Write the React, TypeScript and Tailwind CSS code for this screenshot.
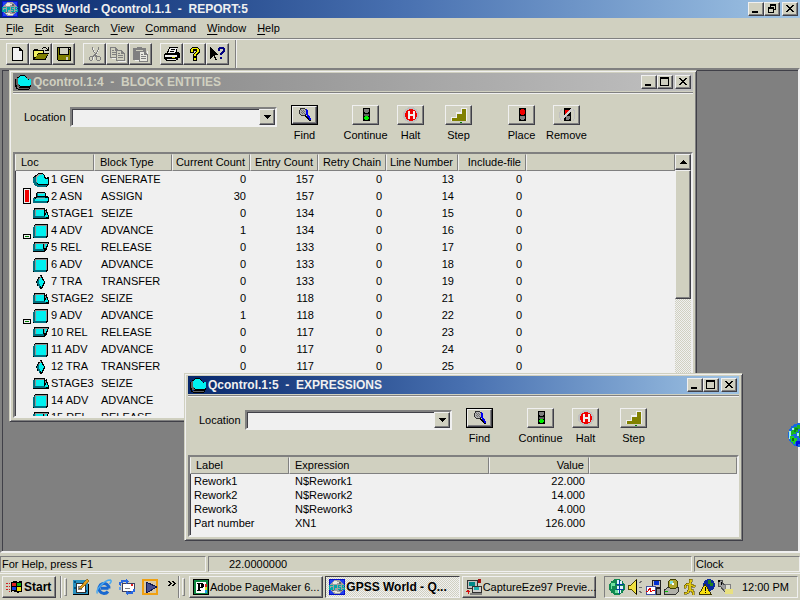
import type { ReactNode } from "react";

const raised =
  "border border-t-[#f0f0f0] border-l-[#f0f0f0] border-b-[#404048] border-r-[#404048] bg-[#d0d0c0] shadow-[inset_-1px_-1px_0_#808080]";
const sunken =
  "border-2 border-t-[#808080] border-l-[#808080] border-b-[#f0f0f0] border-r-[#f0f0f0] shadow-[inset_1px_1px_0_#404048]";
const thinSunken =
  "border border-t-[#808080] border-l-[#808080] border-b-[#f0f0f0] border-r-[#f0f0f0]";
const dither =
  "bg-[repeating-conic-gradient(#d0d0c0_0_25%,#f0f0f0_0_50%)] bg-[length:2px_2px]";

function Icon({ size = 16, children }: { size?: number; children: ReactNode }) {
  return (
    <svg
      width={size}
      height={size}
      viewBox="0 0 16 16"
      shapeRendering="crispEdges"
      aria-hidden="true"
      className="block shrink-0"
    >
      {children}
    </svg>
  );
}

/* ---------- window chrome ---------- */

function CaptionButton({ kind }: { kind: "Minimize" | "Maximize" | "Restore" | "Close" }) {
  return (
    <button aria-label={kind} className={`${raised} flex h-[14px] w-4 items-center justify-center`}>
      <svg width="12" height="10" viewBox="0 0 12 10" shapeRendering="crispEdges" aria-hidden="true">
        {kind === "Minimize" && <path d="M2 7h6v2H2z" />}
        {kind === "Maximize" && <path fillRule="evenodd" d="M1 0h9v9H1zM2 2v6h7V2z" />}
        {kind === "Restore" && (
          <path
            fillRule="evenodd"
            d="M4 0h6v6H8V5h1V2H5v1H4zM2 3h6v6H2zM3 5v3h4V5z"
          />
        )}
        {kind === "Close" && (
          <path d="M2 1h2v1h1v1h2V2h1V1h2v1H9v1H8v1H7v1h1v1h1v1h1v1H8V7H7V6H5v1H4v1H2V7h1V6h1V5h1V4H4V3H3V2H2z" />
        )}
      </svg>
    </button>
  );
}

function GpssIcon() {
  return (
    <Icon>
      <rect width="16" height="16" fill="#0810c8" />
      <rect x="1" y="1" width="14" height="14" fill="#2040f0" />
      <circle cx="8" cy="8" r="7" fill="#a0a0a0" />
      <path d="M5 2h3v1h3v1H8v1H4V3h1zM4 12h4v1h3v1H6v-1H4z" fill="#e8e8e0" />
      <path d="M10 3h2v2h-2zM3 11h2v1H3zM10 11h3v1h-3z" fill="#606068" />
      <path
        d="M0 6h4v1H1v2h1V8h2v3H0zM5 6h3v3H6v2H5zM9 6h3v1h-2v1h2v3H9v-1h2V9H9zM13 6h3v1h-2v1h2v3h-3v-1h2V9h-2z"
        fill="#00a8a8"
      />
    </Icon>
  );
}

function BlobIcon() {
  return (
    <Icon>
      <path d="M4 2h1V1h5v1h1v1h1v2h4v8h-1v1H4v-1H2v-1H1V5h1V3h2z" fill="#000" />
      <path d="M0 5h1v7h1v2h2v1h10v-1h1v1h-1v1H3v-1H1v-2H0z" fill="#000" />
      <path d="M1 5h1V4h1v6h1v2h1v1H2v-2H1zM3 14h11v1H3z" fill="#606060" />
      <path d="M5 2h5v1h1v1h1v1h1v1h1V5h2v6h-1v1H5v-1H4v-1H3V4h1V3h1z" fill="#00f0f0" />
    </Icon>
  );
}

/* ---------- block glyphs ---------- */

type Glyph = "gen" | "asn" | "seize" | "adv" | "rel" | "tra";

function BlockGlyph({ kind }: { kind: Glyph }) {
  return (
    <Icon>
      {kind === "gen" && (
        <>
          <path d="M4 2h1V1h5v1h1v1h1v2h1v1h1V5h2v8h-1v1h-1v1H4v-1H2v-1H1v-2H0V5h1V4h1V3h2z" fill="#000" />
          <path d="M0 6h1V5h2v5h1v2h1v1h9v1h-1v1H4v-1H2v-1H1v-2H0z" fill="#007080" />
          <path d="M5 3h1V2h4v1h1v3h1v1h3v5H5v-1H4v-1H3V4h2z" fill="#00f0f0" />
          <path d="M4 3h1V2h4v1H6v1H5v1H4v5H3V4h1z" fill="#a0a0a0" />
        </>
      )}
      {kind === "asn" && (
        <>
          <path d="M4 3h8v1h1v3h2v1h1v5h-1v1H0V9h1V8h2V4h1z" fill="#000" />
          <path d="M0 9h2v3h12v2H0z" fill="#007080" />
          <path d="M5 4h7v3H5zM3 9h12v3H2v-2h1z" fill="#00f0f0" />
          <path d="M4 4h1v3H4zM4 8h8v1H4z" fill="#007080" />
          <path d="M5 4h6v1H5zM3 9h9v1H3z" fill="#80c0c0" />
        </>
      )}
      {kind === "seize" && (
        <>
          <path d="M1 2h11v2h1V3h1v3h1v3h1v4H0V4h1z" fill="#000" />
          <path d="M0 4h2v6h11v2H0z" fill="#007080" />
          <path d="M3 4h8v6H3zM13 7h1v2h1v2h-3V9h1z" fill="#00f0f0" />
          <path d="M2 3h9v1H3v6H2zM12 5h1v2h-1z" fill="#909090" />
        </>
      )}
      {kind === "rel" && (
        <>
          <path d="M1 2h15v2h-1v3h-1v3h-1v1h-1v1H0V4h1z" fill="#000" />
          <path d="M0 4h2v5h9v2H0z" fill="#007080" />
          <path d="M3 4h7v5H3zM12 4h2v2h-1v2h-1z" fill="#00f0f0" />
          <path d="M2 3h13v1H3v5H2zM11 4h1v4h-1z" fill="#909090" />
        </>
      )}
      {kind === "adv" && (
        <>
          <path d="M2 1h13v13h-1v1H0V4h1V2h1z" fill="#000" />
          <path d="M0 4h1V3h1v10h11v2H1v-1H0z" fill="#007080" />
          <path d="M2 2h12v11H2z" fill="#909090" />
          <path d="M3 3h10v10H3z" fill="#00f0f0" />
        </>
      )}
      {kind === "tra" && (
        <>
          <path d="M7 1h2v2h1v2h1v2h1v3h-1v2h-1v2H9v1H7v-1H6v-2H4V9H3V7h1V5h1V3h2z" fill="#000" />
          <path d="M6 4h1v10H6v-2H5v-2H4V7h1V5h1z" fill="#007080" />
          <path d="M7 3h1v1h1v2h1v1h1v2h-1v2H9v2H8v-1H7v-2H6V6h1z" fill="#00f0f0" />
          <path d="M7 2h1v2H7v2H6V4h1z" fill="#a0a0a0" />
        </>
      )}
    </Icon>
  );
}

/* ---------- application toolbar ---------- */

const doc = (x: number, y: number, fill: string, ink: string) => (
  <g transform={`translate(${x} ${y})`}>
    <path d="M0 0h6v1h1v1h1v1h1v8H0z" fill={ink} />
    <path d="M1 1h4v3h3v6H1z" fill={fill} />
    <path d="M2 3h2v1H2zM2 5h5v1H2zM2 7h5v1H2z" fill={ink} />
  </g>
);

const toolGroups: { name: string; disabled?: boolean; art: ReactNode }[][] = [
  [
    {
      name: "New",
      art: (
        <>
          <path d="M2 1h8v1h1v1h1v1h1v11H2z" />
          <path d="M3 2h6v3h3v9H3z" fill="#f0f0f0" />
        </>
      ),
    },
    {
      name: "Open",
      art: (
        <>
          <path d="M0 4h1V3h4v1h6v3h5v1h-1v2h-1v2h-1v2H0zM9 2h1V1h3v1h1v1h1V1h1v4h-4V4h2V3h-1V2h-3v1H9z" />
          <path d="M1 5h9v2H5v1H4v2H3v1H1z" fill="#f0f060" />
          <path d="M5 8h10l-3 5H2z" fill="#808000" />
        </>
      ),
    },
    {
      name: "Save",
      art: (
        <>
          <path d="M1 1h14v14H2v-1H1z" />
          <path d="M2 2h1v7h10V4h1v10H2z" fill="#808000" />
          <path d="M4 2h8v6H4zM10 11h2v3h-2zM13 2h1v1h-1z" fill="#d0d0c0" />
        </>
      ),
    },
  ],
  [
    {
      name: "Cut",
      disabled: true,
      art: (
        <>
          <path
            d="M6 2h1v3h1v2h1v1H8V7H7V5H6zM11 2h1v3h-1v2h-1v2H9V7h1V5h1zM6 11h1v3H6zM13 11h1v3h-1v1h-3v-1h3z"
            fill="#f0f0f0"
          />
          <path
            fillRule="evenodd"
            d="M5 1h1v3h1v2h1v1h1V6h1V4h1V1h1v3h-1v2h-1v2H9v1h1v1h3v1h1v3h-1v1h-3v-1H9v-3H8v-1H7v1h-1v3H5v1H3v-1H2v-3h1v-1h3V9h1V8h1V7H7V6H6V4H5zM3 11v3h2v-3zM10 11v3h3v-3z"
            fill="#808080"
          />
        </>
      ),
    },
    {
      name: "Copy",
      disabled: true,
      art: (
        <>
          <path d="M8 15h8v1H8zM2 12h5v1H2z" fill="#f0f0f0" />
          {doc(0, 1, "#d0d0c0", "#808080")}
          {doc(6, 4, "#d0d0c0", "#808080")}
        </>
      ),
    },
    {
      name: "Paste",
      disabled: true,
      art: (
        <>
          <path d="M2 14h6v1H2zM14 5h1v3h-1z" fill="#f0f0f0" />
          <path d="M0 2h4V1h5v1h4v12H0z" fill="#808080" />
          <path d="M3 4h7v1H3z" fill="#d0d0c0" />
          {doc(6, 5, "#e8e8e0", "#808080")}
        </>
      ),
    },
  ],
  [
    {
      name: "Print",
      art: (
        <>
          <path d="M5 1h9v1h-1v4h2v1h1v5h-2v2h-2v1H2v-1H1v-1H0V8h1V7h2V5h1V3h1z" />
          <path d="M6 2h7l-2 5H4zM1 9h12v2H1zM3 12h9v2H3z" fill="#f0f0f0" />
          <path d="M7 3h4v1H7zM6 5h4v1H6zM3 12h9v1H3z" />
          <path d="M8 11h3v1H8z" fill="#e0e000" />
        </>
      ),
    },
    {
      name: "Help",
      art: (
        <>
          <path d="M5 1h6v1h1v1h1v4h-1v1h-1v1h-1v2H6V8h1V7h1V6h1V5H7v2H3V3h1V2h1zM6 11h4v4H6z" />
          <path d="M5 2h6v1h1v3h-1v1h-1v1H9v2H7V8h1V7h1V6h1V3H6v3H4V3h1zM7 12h2v2H7z" fill="#f0f000" />
        </>
      ),
    },
    {
      name: "Context help",
      art: (
        <>
          <path d="M0 1h1v1h1v1h1v1h1v1h1v1h1v1h1v1h1v1H5v2h1v2h1v1H5v-2H4v-2H3v1H2v1H1v1H0z" />
          <path d="M9 1h5v1h1v4h-1v1h-1v1h-1v1h-2V7h1V6h1V5h1V3h-3v2H8V2h1zM10 11h2v2h-2z" fill="#000080" />
        </>
      ),
    },
  ],
];

/* ---------- simulation commands ---------- */

const commandArt = {
  Find: (
    <>
      <path d="M3 1h5v1h1v1h1v4H9v1H8v1H4V8H3V7H2V3h1z" fill="#303030" />
      <path d="M4 2h4v1h1v4H8v1H4V7H3V3h1z" fill="#b0b0b0" />
      <path d="M4 3h1v1H4zM6 3h1v1H6zM5 4h1v1H5zM7 4h1v1H7zM4 5h1v1H4zM6 5h1v1H6zM5 6h1v1H5zM7 6h1v1H7z" fill="#707070" />
      <path d="M9 2h1v1h1v5h1v1h1v2h1v2h-2v-1h-1v-2h-1V8H9z" fill="#0000f0" />
      <path d="M8 8h1v1h1v1h1v1h1v2h2v1h-2v-1h-1v-1h-1v-1H9v-1H8z" />
    </>
  ),
  Continue: (
    <>
      <path d="M5 1h7v13H5z" />
      <path d="M6 2h5v3h-1v1H7V5H6z" fill="#808080" />
      <path d="M6 7h5v2H6z" fill="#606060" />
      <path d="M7 9h3v1h1v2h-1v1H7v-1H6v-2h1z" fill="#00f000" />
    </>
  ),
  Halt: (
    <>
      <circle cx="8" cy="8" r="8" fill="#c0c0c0" />
      <circle cx="8" cy="8" r="6" fill="#f00000" />
      <path d="M5 4h2v3h3V4h2v8h-2V9H7v3H5z" fill="#f0f0f0" />
    </>
  ),
  Step: (
    <>
      <path d="M0 10h5V5h5V1h6v13H0z" fill="#f0f0f0" />
      <path d="M1 11h5V7h5V2h4v12H1z" fill="#808000" />
      <path d="M9 15h2v1H9z" fill="#008000" />
    </>
  ),
  Place: (
    <>
      <path d="M5 1h7v13H5z" />
      <path d="M7 2h3v1h1v4h-1v1H7V7H6V3h1z" fill="#f00000" />
      <path d="M6 9h5v3h-1v1H7v-1H6z" fill="#808080" />
    </>
  ),
  Remove: (
    <>
      <path d="M2 2h1v2H2v2H1v5h1v2h1v1H2v-1H1v-2H0V5h1V3h1zM14 2h1v1h1v9h-1v2h-1v-2h1V4h-1z" fill="#c0c0c0" />
      <path d="M5 1h7v13H5z" />
      <path d="M6 3h5v2H9v2H6z" fill="#f00000" />
      <path d="M7 9h4v3h-1v1H7z" fill="#808080" />
      <path d="M2 13L13 2" stroke="#d0d0d0" strokeWidth="2" />
    </>
  ),
};

type Command = keyof typeof commandArt;

function CommandButton({ name, isDefault = false }: { name: Command; isDefault?: boolean }) {
  return (
    <button className="flex w-[45px] flex-col items-center">
      <span className={isDefault ? "bg-black p-px" : "p-px"}>
        <span
          className={`${raised} flex items-center justify-center ${
            isDefault ? "h-[18px] w-[25px]" : "-m-px h-5 w-[27px]"
          }`}
        >
          <Icon>{commandArt[name]}</Icon>
        </span>
      </span>
      <span className="mt-1 leading-3">{name}</span>
    </button>
  );
}

function CommandGroup({ names }: { names: Command[] }) {
  return (
    <div className="flex">
      {names.map((n) => (
        <CommandButton key={n} name={n} isDefault={n === "Find"} />
      ))}
    </div>
  );
}

/* ---------- child windows ---------- */

function ChildWindow({
  title,
  active,
  fieldId,
  breakpoints,
  className,
  children,
}: {
  title: string;
  active: boolean;
  fieldId: string;
  breakpoints: boolean;
  className: string;
  children: ReactNode;
}) {
  return (
    <section
      aria-label={title}
      className={`absolute flex flex-col border border-t-[#d0d0c0] border-r-[#404048] border-b-[#404048] border-l-[#d0d0c0] bg-[#d0d0c0] px-[3px] pt-[2px] pb-[3px] shadow-[inset_1px_1px_0_#f0f0f0,inset_-1px_-1px_0_#808080] ${className}`}
    >
      <header
        className={`flex h-[18px] shrink-0 items-center pr-[2px] pl-[2px] ${
          active
            ? "bg-linear-to-r from-[#08286c] via-[#4870b0] to-[#a0c4e4] text-[#f0f0f0]"
            : "bg-linear-to-r from-[#808080] to-[#c0c0c0] text-[#d0d0c0]"
        }`}
      >
        <BlobIcon />
        <h2 className="ml-[2px] flex-1 text-xs font-bold whitespace-pre">{title}</h2>
        <CaptionButton kind="Minimize" />
        <CaptionButton kind="Maximize" />
        <span className="w-[2px]" />
        <CaptionButton kind="Close" />
      </header>
      <div className="mt-px h-[2px] shrink-0 border-t border-b border-t-[#808080] border-b-[#f0f0f0]" />
      <div className="flex h-[58px] shrink-0 items-start pt-[11px] pl-[11px]">
        <label htmlFor={fieldId} className="mt-[2px] w-[46px] leading-5">
          Location
        </label>
        <div className="relative mt-[2px] h-5 w-[207px]">
          <select id={fieldId} className={`${sunken} h-5 w-full appearance-none bg-[#f0f0f0] px-1`}>
            <option></option>
          </select>
          <span
            className={`${raised} pointer-events-none absolute top-[2px] right-[2px] flex h-4 w-4 items-center justify-center`}
          >
            <svg width="7" height="4" viewBox="0 0 7 4" shapeRendering="crispEdges" aria-hidden="true">
              <path d="M0 0h7v1H6v1H5v1H4v1H3V3H2V2H1V1H0z" />
            </svg>
          </span>
        </div>
        <div className="ml-[5px] flex">
          <CommandGroup names={["Find"]} />
          <div className="ml-4 flex">
            <CommandGroup names={["Continue", "Halt"]} />
            <div className="ml-[3px]">
              <CommandGroup names={["Step"]} />
            </div>
          </div>
          {breakpoints && (
            <div className="ml-[18px]">
              <CommandGroup names={["Place", "Remove"]} />
            </div>
          )}
        </div>
      </div>
      <div className={`${sunken} flex min-h-0 flex-1 overflow-hidden bg-[#f0f0f0]`}>{children}</div>
    </section>
  );
}

const headCell =
  "h-[17px] border border-t-[#d0d0c0] border-l-[#f0f0f0] border-r-[#808080] border-b-[#808080] bg-[#d0d0c0] p-0 font-normal leading-[15px] whitespace-nowrap";
const headLeft = `${headCell} pl-[5px] text-left`;
const headRight = `${headCell} pr-1 text-right`;

type Block = {
  loc: string;
  glyph: Glyph;
  type: string;
  counts?: [current: number, entry: number, retry: number, line: number, include: number];
  queue?: "full" | "some";
};

const blocks: Block[] = [
  { loc: "1 GEN", glyph: "gen", type: "GENERATE", counts: [0, 157, 0, 13, 0] },
  { loc: "2 ASN", glyph: "asn", type: "ASSIGN", counts: [30, 157, 0, 14, 0], queue: "full" },
  { loc: "STAGE1", glyph: "seize", type: "SEIZE", counts: [0, 134, 0, 15, 0] },
  { loc: "4 ADV", glyph: "adv", type: "ADVANCE", counts: [1, 134, 0, 16, 0], queue: "some" },
  { loc: "5 REL", glyph: "rel", type: "RELEASE", counts: [0, 133, 0, 17, 0] },
  { loc: "6 ADV", glyph: "adv", type: "ADVANCE", counts: [0, 133, 0, 18, 0] },
  { loc: "7 TRA", glyph: "tra", type: "TRANSFER", counts: [0, 133, 0, 19, 0] },
  { loc: "STAGE2", glyph: "seize", type: "SEIZE", counts: [0, 118, 0, 21, 0] },
  { loc: "9 ADV", glyph: "adv", type: "ADVANCE", counts: [1, 118, 0, 22, 0], queue: "some" },
  { loc: "10 REL", glyph: "rel", type: "RELEASE", counts: [0, 117, 0, 23, 0] },
  { loc: "11 ADV", glyph: "adv", type: "ADVANCE", counts: [0, 117, 0, 24, 0] },
  { loc: "12 TRA", glyph: "tra", type: "TRANSFER", counts: [0, 117, 0, 25, 0] },
  { loc: "STAGE3", glyph: "seize", type: "SEIZE" },
  { loc: "14 ADV", glyph: "adv", type: "ADVANCE" },
  { loc: "15 REL", glyph: "rel", type: "RELEASE" },
];

function QueueMark({ level }: { level?: "full" | "some" }) {
  return (
    <span className="flex h-[17px] w-2 shrink-0 flex-col justify-end">
      {level === "full" && (
        <span className="mb-px h-4 w-2 border border-black bg-[#f00000] shadow-[inset_0_0_0_1px_#f0f0f0]" />
      )}
      {level === "some" && (
        <span className="h-[5px] w-2 border border-black bg-[#008000] shadow-[inset_0_0_0_1px_#f0f0f0]" />
      )}
    </span>
  );
}

function BlockTable() {
  return (
    <>
      <div className="min-w-0 flex-1">
        <table className="w-full table-fixed border-separate border-spacing-0">
          <colgroup>
            <col className="w-[79px]" />
            <col className="w-[78px]" />
            <col className="w-[78px]" />
            <col className="w-[68px]" />
            <col className="w-[68px]" />
            <col className="w-[72px]" />
            <col className="w-[68px]" />
            <col />
          </colgroup>
          <thead>
            <tr>
              <th className={headLeft}>Loc</th>
              <th className={headLeft}>Block Type</th>
              <th className={headRight}>Current Count</th>
              <th className={headRight}>Entry Count</th>
              <th className={headRight}>Retry Chain</th>
              <th className={headRight}>Line Number</th>
              <th className={headRight}>Include-file</th>
              <td className={headCell} />
            </tr>
          </thead>
          <tbody>
            {blocks.map(({ loc, glyph, type, counts, queue }) => (
              <tr key={loc} className="h-[17px] leading-[17px]">
                <td className="p-0">
                  <div className="flex h-[17px] items-center gap-[2px] pl-2 whitespace-nowrap">
                    <QueueMark level={queue} />
                    <BlockGlyph kind={glyph} />
                    <span>{loc}</span>
                  </div>
                </td>
                <td className="p-0 pl-[7px]">{type}</td>
                {counts?.map((n, i) => (
                  <td key={i} className="p-0 pr-1 text-right">
                    {n}
                  </td>
                ))}
              </tr>
            ))}
          </tbody>
        </table>
      </div>
      <div className={`${dither} flex w-4 shrink-0 flex-col`}>
        <button aria-label="Scroll up" className={`${raised} flex h-4 items-center justify-center`}>
          <svg width="7" height="4" viewBox="0 0 7 4" shapeRendering="crispEdges" aria-hidden="true">
            <path d="M3 0h1v1h1v1h1v1h1v1H0V3h1V2h1V1h1z" />
          </svg>
        </button>
        <div className={`${raised} h-[129px]`} />
      </div>
    </>
  );
}

const expressions = [
  ["Rework1", "N$Rework1", "22.000"],
  ["Rework2", "N$Rework2", "14.000"],
  ["Rework3", "N$Rework3", "4.000"],
  ["Part number", "XN1", "126.000"],
];

function ExpressionTable() {
  return (
    <table className="h-fit w-full table-fixed border-separate border-spacing-0">
      <colgroup>
        <col className="w-[99px]" />
        <col className="w-[200px]" />
        <col className="w-[100px]" />
        <col />
      </colgroup>
      <thead>
        <tr>
          <th className={headLeft}>Label</th>
          <th className={headLeft}>Expression</th>
          <th className={headRight}>Value</th>
          <td className={headCell} />
        </tr>
      </thead>
      <tbody>
        {expressions.map(([label, expr, value]) => (
          <tr key={label} className="h-[14px] leading-[14px]">
            <td className="p-0 pl-1">{label}</td>
            <td className="p-0 pl-[6px]">{expr}</td>
            <td className="p-0 pr-1 text-right">{value}</td>
          </tr>
        ))}
      </tbody>
    </table>
  );
}

/* ---------- taskbar ---------- */

function Globe({ size }: { size: number }) {
  return (
    <svg width={size} height={size} viewBox="0 0 24 24" shapeRendering="crispEdges" aria-hidden="true" className="block">
      <circle cx="12" cy="12" r="12" fill="#1868e0" />
      <path d="M1 8h2v8H1zM4 5h2v2H4zM5 15h3v2H5zM9 10h3v3H9z" fill="#a0f0f0" />
      <path d="M4 7h2V4h3V2h3v4h-2v3H8v2H5v1H3V8h1z" fill="#18b820" />
      <path d="M7 5h3v2H8v2H6V7h1z" fill="#108018" />
      <path d="M2 13h4v2h3v4H7v2H5v-2H3v-3H2z" fill="#20d020" />
      <path d="M4 15h2v3H4z" fill="#107010" />
      <path d="M8 18h4v3h-2v2H8z" fill="#0010e0" />
      <path d="M11 8h8v7h-4v4h-3v-4h-1z" fill="#18a818" />
    </svg>
  );
}

const quickLaunch: { name: string; art: ReactNode }[] = [
  {
    name: "Show Desktop",
    art: (
      <>
        <path d="M0 1h15v14H0z" fill="#2890c0" />
        <path d="M1 2h2v2H1zM1 8h2v2H1zM12 11h2v2h-2z" fill="#005080" />
        <path d="M3 4h9v9H3z" fill="#fff" stroke="#303030" />
        <circle cx="7" cy="9" r="2" fill="none" stroke="#808080" />
        <path d="M7 8L14 0l2 2-7 7-3 1z" fill="#e0a020" stroke="#604000" strokeWidth="0.5" />
        <path d="M0 15h16v1H0zM15 5h1v10h-1z" />
      </>
    ),
  },
  {
    name: "Internet Explorer",
    art: (
      <g shapeRendering="auto" fill="none">
        <path d="M12.500 9.300H5M13 9.500A5 5 0 1 0 12 12.500" stroke="#1868d0" strokeWidth="3" />
        <path d="M1.500 14.500C-1 11 8 1 14.500 1c1.500 1 0 3-1 4" stroke="#48a8f0" strokeWidth="1.500" />
      </g>
    ),
  },
  {
    name: "Outlook Express",
    art: (
      <>
        <path d="M3 4h12v8H3z" fill="#fff" stroke="#404060" />
        <path d="M12 5h2v2h-2z" fill="#e02020" />
        <path d="M6 9h5v1H6z" fill="#808080" />
        <path d="M0 6V3h2V1h5V0l3 2-3 3V3H4v1H2v3zM16 10v3h-2v2H9v1l-3-2 3-3v2h3v-1h2v-2z" fill="#2868e0" />
        <path d="M0 8h2v3H0z" fill="#60a0f0" />
      </>
    ),
  },
  {
    name: "Media Player",
    art: (
      <>
        <path d="M0 0h16v16H0z" fill="#f0a010" />
        <path d="M2 2h12v12H2z" fill="#d8c8a8" />
        <path d="M4 3L15 8 4 14z" fill="#485090" stroke="#101850" />
      </>
    ),
  },
];

const tray: { name: string; art: ReactNode }[] = [
  {
    name: "Network globe",
    art: (
      <>
        <circle cx="8" cy="8" r="8" fill="#108850" />
        <path d="M2 4h4v3H3v3H2zM6 11h4v3H6z" fill="#70e0a0" />
        <path d="M8 1h2v4H8zM11 2h2v3h-2zM8 7h2v3H8zM11 7h3v3h-3zM9 11h3v3H9z" fill="#e0f0ff" />
        <path d="M10 1h1v14h-1zM7 5h8v1H7zM7 10h8v1H7z" fill="#0040a0" />
      </>
    ),
  },
  {
    name: "Volume",
    art: (
      <>
        <path d="M1 6h3l5-5v14l-5-5H1z" fill="#f0e040" stroke="#504800" />
        <path d="M9 1h1v14H9z" />
        <path d="M12 4l3-2M12 8h3M12 12l3 2" stroke="#707070" />
      </>
    ),
  },
  {
    name: "System monitor",
    art: (
      <>
        <path d="M7 1h8v7H7z" fill="#c0c0c0" stroke="#202020" />
        <path d="M9 2h5v4H9z" fill="#0030d0" />
        <path d="M1 7h9v8H1z" fill="#fff" stroke="#4050a0" />
        <path d="M1 12h2l2-3 1 4 2-2h2" stroke="#e00000" fill="none" />
        <path d="M11 9h4v6h-4z" fill="#909090" stroke="#202020" />
      </>
    ),
  },
  {
    name: "CD drive",
    art: (
      <>
        <path d="M1 10h2l2-2h10v5l-2 2H1z" fill="#b0b0a8" stroke="#303030" />
        <circle cx="10" cy="5" r="5" fill="#b0a830" stroke="#404000" />
        <path d="M7 2h3v3H7z" fill="#80e0e0" />
        <path d="M9 4h2v2H9z" fill="#fff" />
        <path d="M2 12h3v1H2z" fill="#00c000" />
      </>
    ),
  },
  {
    name: "Messenger",
    art: (
      <path
        d="M8 0h3v3h-1v2h2v1h2v2h-3V7h-1v3h2v2h1v4h-2v-3h-1v-1H8v2H6v1H3v-2h3v-2h1V6H5v3H3V6h1V5h1V4h3z"
        fill="#e0c810"
        stroke="#504000"
        strokeWidth="0.5"
      />
    ),
  },
  {
    name: "Connection alert",
    art: (
      <>
        <circle cx="10" cy="6" r="6" fill="#0828a0" />
        <path d="M9 1h3v3h2v3h-3V5H9z" fill="#208020" />
        <path d="M6 5l6 10H0z" fill="#f8e010" stroke="#403800" />
        <path d="M6 8h1v4H6zM6 13h1v1H6z" />
      </>
    ),
  },
  {
    name: "Scheduler",
    art: (
      <>
        <path d="M1 1h4v3l9 6v4H9L3 7H1z" fill="#a0a0a0" stroke="#505050" />
        <path d="M1 1h2v2H1zM4 3h1v3H4z" />
        <circle cx="11" cy="8" r="3" fill="#e0e0d0" stroke="#808080" />
        <path d="M8 10h8v5H8z" fill="#e8e080" />
      </>
    ),
  },
];

function Gripper() {
  return (
    <span className="flex h-[22px] shrink-0 gap-[2px]">
      <span className="w-[2px] border-r border-l border-r-[#f0f0f0] border-l-[#808080]" />
      <span className="my-[2px] w-[3px] border border-t-[#f0f0f0] border-r-[#808080] border-b-[#808080] border-l-[#f0f0f0]" />
    </span>
  );
}

function Task({ icon, title, pressed = false }: { icon: ReactNode; title: string; pressed?: boolean }) {
  return (
    <button
      aria-pressed={pressed}
      className={`flex h-[22px] min-w-0 flex-1 items-center gap-px pl-[3px] text-left whitespace-nowrap ${
        pressed
          ? `border border-t-[#404048] border-r-[#f0f0f0] border-b-[#f0f0f0] border-l-[#404048] text-xs font-bold ${dither}`
          : raised
      }`}
    >
      {icon}
      <span>{title}</span>
    </button>
  );
}

function Taskbar() {
  return (
    <nav className="flex h-[27px] shrink-0 items-center border-t border-t-[#f0f0f0] px-[2px]">
      <button className={`${raised} flex h-[22px] w-[54px] shrink-0 items-center gap-[2px] pl-[3px] text-xs font-bold`}>
        <Icon>
          <path d="M0 4h2v1H0zM0 7h2v1H0zM0 10h2v1H0zM3 4h1v1H3zM3 7h1v1H3zM3 10h1v1H3zM3 12h1v1H3z" fill="#d02020" />
          <path d="M5 3h2V2h4v1h2V2h3v11h-3v1h-2v-1H8v-1H6v1H5z" />
          <path d="M6 4h4v3H6z" fill="#e02020" />
          <path d="M11 4h4v3h-4z" fill="#10b010" />
          <path d="M6 8h4v3H6z" fill="#1040e0" />
          <path d="M11 8h4v4h-4z" fill="#f0e010" />
        </Icon>
        Start
      </button>
      <div className="ml-1 flex shrink-0 items-center">
        <Gripper />
        <div className="ml-[6px] flex gap-[7px]">
          {quickLaunch.map((q) => (
            <button key={q.name} aria-label={q.name}>
              <Icon>{q.art}</Icon>
            </button>
          ))}
        </div>
        <button aria-label="More shortcuts" className="mr-[2px] ml-[10px]">
          <svg width="8" height="16" viewBox="0 0 8 16" shapeRendering="crispEdges" aria-hidden="true">
            <path d="M0 2h2v1h1v1h1v1H3v1H2v1H0V6h1V5h1V4H1V3H0zM4 2h2v1h1v1h1v1H7v1H6v1H4V6h1V5h1V4H5V3H4z" />
          </svg>
        </button>
        <Gripper />
      </div>
      <div className="ml-1 flex min-w-0 flex-1 gap-[2px]">
        <Task
          title="Adobe PageMaker 6..."
          icon={
            <Icon>
              <path d="M0 0h16v16H0z" />
              <path d="M1 1h14v14H1z" fill="#108840" />
              <path d="M3 3h10v11H3z" fill="#fff" />
              <path d="M4 4h6v1h1v3h-1v1H7v2h1v1H4v-1h1V5H4zM7 5v3h1V5z" fillRule="evenodd" />
              <path d="M12 5h2v3h-2z" fill="#e02020" />
              <path d="M12 8h2v3h-2z" fill="#e0e020" />
              <path d="M12 11h2v3h-2z" fill="#20a0f0" />
            </Icon>
          }
        />
        <Task pressed title="GPSS World - Q..." icon={<GpssIcon />} />
        <Task
          title="CaptureEze97 Previe..."
          icon={
            <Icon>
              <path d="M1 1h10v8H1z" fill="#c0c0c0" stroke="#303030" />
              <path d="M3 3h6v4H3z" fill="#008888" />
              <path d="M6 7h9v6H6z" fill="#d0d0d0" stroke="#303030" />
              <path d="M8 8h5v3H8z" fill="#20b0b0" />
              <path d="M4 14h12v2H4z" fill="#808080" />
              <path d="M12 0h3v4h-3z" fill="#a01010" />
              <path d="M1 11h2v1h1v1H3v2H2v-2H0v-1h1z" fill="#d01010" />
            </Icon>
          }
        />
      </div>
      <div className={`${thinSunken} ml-2 flex h-[22px] w-[194px] shrink-0 items-center justify-between pr-2 pl-1`}>
        <div className="flex gap-[2px]">
          {tray.map((t) => (
            <button key={t.name} aria-label={t.name}>
              <Icon>{t.art}</Icon>
            </button>
          ))}
        </div>
        <time>12:00 PM</time>
      </div>
    </nav>
  );
}

/* ---------- application ---------- */

const menus = ["File", "Edit", "Search", "View", "Command", "Window", "Help"];

export default function App() {
  return (
    <div className="flex h-screen flex-col overflow-hidden bg-[#d0d0c0] font-['Liberation_Sans',Arial,sans-serif] text-[11px] text-black">
      <header className="flex h-[18px] shrink-0 items-center bg-linear-to-r from-[#08286c] via-[#4870b0] to-[#a0c4e4] px-[2px] text-[#f0f0f0]">
        <GpssIcon />
        <h1 className="ml-[2px] flex-1 text-xs font-bold whitespace-pre">
          {"GPSS World - Qcontrol.1.1  -  REPORT:5"}
        </h1>
        <CaptionButton kind="Minimize" />
        <CaptionButton kind="Restore" />
        <span className="w-[2px]" />
        <CaptionButton kind="Close" />
      </header>

      <nav className="flex h-[21px] shrink-0 items-center gap-px border-b border-b-[#808080] pl-px">
        {menus.map((m) => (
          <button key={m} className="px-[5px]">
            <span className="underline underline-offset-2">{m[0]}</span>
            {m.slice(1)}
          </button>
        ))}
      </nav>

      <div className="flex h-[29px] shrink-0 border-t border-t-[#f0f0f0] pl-[6px]">
        <div className="flex gap-2 pt-[3px] pr-[6px]">
          {toolGroups.map((group) => (
            <div key={group[0].name} className="flex">
              {group.map((t) => (
                <button
                  key={t.name}
                  aria-label={t.name}
                  disabled={t.disabled}
                  className={`${raised} flex h-[22px] w-[23px] items-center justify-center`}
                >
                  <Icon>{t.art}</Icon>
                </button>
              ))}
            </div>
          ))}
        </div>
        <div className="w-[2px] border-r border-l border-r-[#f0f0f0] border-l-[#808080]" />
      </div>

      <main className="relative min-h-0 flex-1">
        <div className={`${sunken} relative h-full overflow-hidden bg-[#808080]`}>
          <ChildWindow
            title="Qcontrol.1:4  -  BLOCK ENTITIES"
            active={false}
            fieldId="block-location"
            breakpoints
            className="top-0 left-[7px] h-[352px] w-[688px]"
          >
            <BlockTable />
          </ChildWindow>
          <ChildWindow
            title="Qcontrol.1:5  -  EXPRESSIONS"
            active
            fieldId="expression-location"
            breakpoints={false}
            className="top-[303px] left-[182px] h-[168px] w-[559px]"
          >
            <ExpressionTable />
          </ChildWindow>
        </div>
        <div className="absolute top-[355px] right-0 w-3 overflow-hidden">
          <Globe size={24} />
        </div>
      </main>

      <footer className="flex h-5 shrink-0 gap-[2px] pt-[3px] leading-[14px]">
        <div className={`${thinSunken} h-4 w-[206px] pl-px`}>For Help, press F1</div>
        <div className={`${thinSunken} h-4 flex-1 pl-5`}>22.0000000</div>
        <div className={`${thinSunken} h-4 w-[106px] pl-px`}>Clock</div>
      </footer>

      <Taskbar />
    </div>
  );
}
